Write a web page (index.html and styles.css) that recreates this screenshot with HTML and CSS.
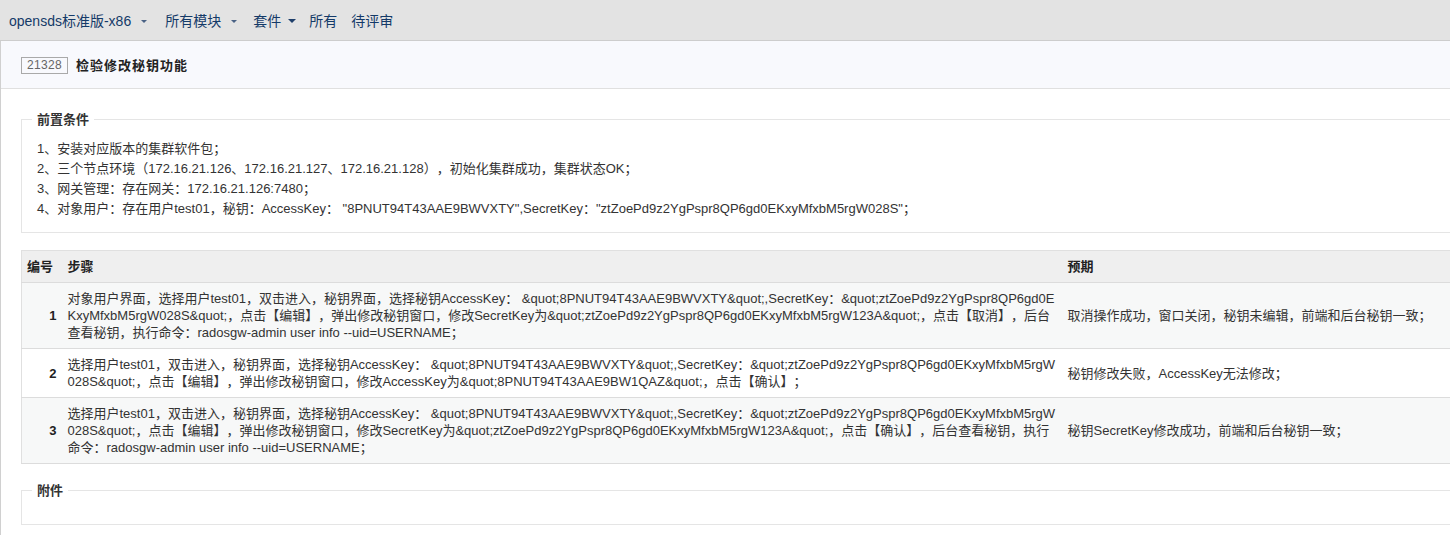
FILE: index.html
```html
<!DOCTYPE html>
<html lang="zh-CN">
<head>
<meta charset="utf-8">
<title>检验修改秘钥功能</title>
<link rel="stylesheet" href="styles.css">
</head>
<body>
<nav class="topnav">
  <a class="nav-item">opensds标准版-x86<span class="caret caret-sm"></span></a>
  <a class="nav-item">所有模块<span class="caret caret-sm"></span></a>
  <a class="nav-item">套件<span class="caret caret-lg"></span></a>
  <a class="nav-item">所有</a>
  <a class="nav-item">待评审</a>
</nav>
<main class="page">
  <header class="case-header">
    <span class="case-id">21328</span>
    <h1 class="case-title">检验修改秘钥功能</h1>
  </header>
  <section class="content">
    <fieldset class="box">
      <legend class="box-legend">前置条件</legend>
      <div class="precond">
        <p>1、安装对应版本的集群软件包；</p>
        <p>2、三个节点环境（172.16.21.126、172.16.21.127、172.16.21.128），初始化集群成功，集群状态OK；</p>
        <p>3、网关管理：存在网关：172.16.21.126:7480；</p>
        <p>4、对象用户：存在用户test01，秘钥：AccessKey： "8PNUT94T43AAE9BWVXTY",SecretKey："ztZoePd9z2YgPspr8QP6gd0EKxyMfxbM5rgW028S"；</p>
      </div>
    </fieldset>

    <table class="steps">
      <colgroup>
        <col class="c-num">
        <col class="c-step">
        <col class="c-exp">
      </colgroup>
      <thead>
        <tr><th>编号</th><th>步骤</th><th>预期</th></tr>
      </thead>
      <tbody>
        <tr class="odd">
          <td class="num">1</td>
          <td class="step">对象用户界面，选择用户test01，双击进入，秘钥界面，选择秘钥AccessKey： &amp;quot;8PNUT94T43AAE9BWVXTY&amp;quot;,SecretKey：&amp;quot;ztZoePd9z2YgPspr8QP6gd0EKxyMfxbM5rgW028S&amp;quot;，点击【编辑】，弹出修改秘钥窗口，修改SecretKey为&amp;quot;ztZoePd9z2YgPspr8QP6gd0EKxyMfxbM5rgW123A&amp;quot;，点击【取消】，后台查看秘钥，执行命令：radosgw-admin user info --uid=USERNAME；</td>
          <td class="exp">取消操作成功，窗口关闭，秘钥未编辑，前端和后台秘钥一致；</td>
        </tr>
        <tr>
          <td class="num">2</td>
          <td class="step">选择用户test01，双击进入，秘钥界面，选择秘钥AccessKey： &amp;quot;8PNUT94T43AAE9BWVXTY&amp;quot;,SecretKey：&amp;quot;ztZoePd9z2YgPspr8QP6gd0EKxyMfxbM5rgW028S&amp;quot;，点击【编辑】，弹出修改秘钥窗口，修改AccessKey为&amp;quot;8PNUT94T43AAE9BW1QAZ&amp;quot;，点击【确认】；</td>
          <td class="exp">秘钥修改失败，AccessKey无法修改；</td>
        </tr>
        <tr class="odd">
          <td class="num">3</td>
          <td class="step">选择用户test01，双击进入，秘钥界面，选择秘钥AccessKey： &amp;quot;8PNUT94T43AAE9BWVXTY&amp;quot;,SecretKey：&amp;quot;ztZoePd9z2YgPspr8QP6gd0EKxyMfxbM5rgW028S&amp;quot;，点击【编辑】，弹出修改秘钥窗口，修改SecretKey为&amp;quot;ztZoePd9z2YgPspr8QP6gd0EKxyMfxbM5rgW123A&amp;quot;，点击【确认】，后台查看秘钥，执行命令：radosgw-admin user info --uid=USERNAME；</td>
          <td class="exp">秘钥SecretKey修改成功，前端和后台秘钥一致；</td>
        </tr>
      </tbody>
    </table>

    <fieldset class="box box-attach">
      <legend class="box-legend">附件</legend>
    </fieldset>
  </section>
</main>
</body>
</html>
```
FILE: styles.css
```css
html, body {
  margin: 0;
  padding: 0;
  overflow: hidden;
  background: #fff;
}
body {
  font-family: "Liberation Sans", Arial, "Noto Sans CJK SC", sans-serif;
  font-size: 13px;
  color: #333;
  width: 1450px;
  height: 535px;
  text-spacing-trim: space-all;
}

/* top navigation */
.topnav {
  background: #e3e3e3;
  border-bottom: 1px solid #cdcdcd;
  display: flex;
  align-items: center;
  padding-left: 9px;
  box-sizing: border-box;
  height: 41px;
}
.nav-item {
  font-size: 14px;
  color: #143a68;
  display: flex;
  align-items: center;
  margin-right: 14px;
  white-space: nowrap;
}
.nav-item:nth-child(1) { margin-right: 18px; }
.nav-item:nth-child(2) { margin-right: 16px; }
.nav-item:nth-child(3) { margin-right: 13px; }
.caret {
  display: inline-block;
  width: 0;
  height: 0;
  border-left-color: transparent;
  border-right-color: transparent;
  border-bottom: 0;
  border-style: solid;
}
.caret-sm {
  margin-left: 10px;
  margin-top: 2px;
  border-width: 3px 3px 0 3px;
  border-top-color: #4a6285;
}
.caret-lg {
  margin-left: 7px;
  margin-top: 1px;
  border-width: 4px 4px 0 4px;
  border-top-color: #1f3f6b;
}

/* page */
.page {
  width: 1500px;
  border-left: 1px solid #d0d0d0;
  min-height: 494px;
}
.case-header {
  height: 47px;
  background: #f8f9fd;
  border-bottom: 1px solid #e0e0e0;
  display: flex;
  align-items: center;
  padding-left: 20px;
}
.case-id {
  display: inline-block;
  border: 1px solid #a9a9a9;
  color: #666;
  font-size: 12px;
  line-height: 13px;
  padding: 1px 5px;
  letter-spacing: 0.3px;
  margin-top: 1px;
}
.case-title {
  margin: 0 0 0 8px;
  font-size: 13px;
  font-weight: bold;
  color: #222;
  letter-spacing: 1px;
}

.content {
  padding: 22px 20px 0 20px;
}

.box {
  margin: 0;
  border: 1px solid #e5e5e5;
  padding: 11px 15px 13px 15px;
}
.box-legend {
  font-size: 13px;
  font-weight: bold;
  color: #333;
  padding: 0 5px;
  margin-left: -5px;
  line-height: 17px;
}
.precond p {
  margin: 0;
  line-height: 20px;
}

.steps {
  margin-top: 17px;
  width: 100%;
  table-layout: fixed;
  border-collapse: collapse;
  border: 1px solid #e0e0e0;
}
.c-num { width: 41px; }
.c-step { width: 1000px; }
.steps th {
  background: #efefef;
  text-align: left;
  font-weight: bold;
  padding: 7px 5px;
  line-height: 17px;
  border-bottom: 1px solid #dcdcdc;
  color: #222;
}
.steps td {
  padding: 7px 5px;
  line-height: 17px;
  border-bottom: 1px solid #dcdcdc;
  vertical-align: middle;
}
.steps tr.odd td { background: #f7f8f8; }
.steps td.num {
  font-weight: bold;
  font-size: 13px;
  text-align: right;
  padding-right: 6px;
  color: #222;
}
.steps td.step {
  word-break: break-all;
}

.box-attach {
  margin-top: 18px;
  height: 43px;
  padding: 0 15px;
  box-sizing: border-box;
}
```
